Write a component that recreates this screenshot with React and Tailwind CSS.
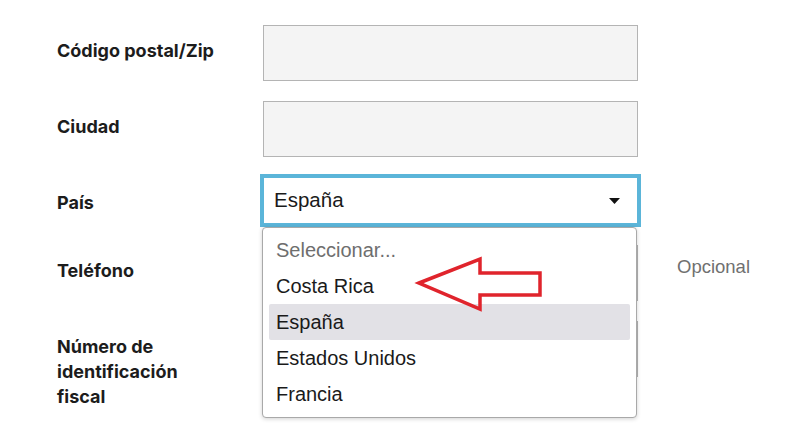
import React from "react";

const labelCls = "w-[206px] shrink-0 pt-[13px] text-[18px] leading-[25px] font-bold text-[#1c1c1c] [font-family:Inter,'Noto_Sans',sans-serif]";

function Row({ label, children, extra, className = "" }) {
  return (
    <div className={"flex items-start " + className}>
      <div className={labelCls}>{label}</div>
      {children}
      {extra}
    </div>
  );
}

const inputCls = "w-[375px] h-[56px] shrink-0 bg-[#f4f4f4] border border-[#b4b4b4]";

export default function App() {
  const items = ["Costa Rica", "España", "Estados Unidos", "Francia"];
  return (
    <div className="relative w-[805px] h-[439px] bg-white overflow-hidden [font-family:'Liberation_Sans',Arial,sans-serif]">
      <div className="flex flex-col pl-[57px] pt-[25px]">
        <Row label="Código postal/Zip">
          <div className={inputCls} />
        </Row>
        <Row label="Ciudad" className="mt-[20px]">
          <div className={inputCls} />
        </Row>
        <Row label="País" className="mt-[20px]">
          <div className="relative w-[375px] shrink-0">
            <div className="h-[47px] bg-white outline-[3px] outline-solid outline-[#5bb5d9] border border-[#5bb5d9] flex items-center justify-between pl-[10px] pr-[17px]">
              <span className="text-[20.5px] text-[#1a1a1a]">España</span>
              <svg width="11" height="6" viewBox="0 0 11 6"><path d="M0 0 H11 L5.5 6 Z" fill="#111" /></svg>
            </div>
            <div className="absolute z-10 left-[-1px] top-[50px] w-[375px] bg-white border border-[#a9a9a9] rounded-[4px] shadow-[0_1px_4px_rgba(0,0,0,0.18)] pt-[4px] pb-[5px] px-[6px]">
              <div className="h-[36px] flex items-center pl-[7px] text-[20px] text-[#6e6e6e]">Seleccionar...</div>
              {items.map((it) => (
                <div
                  key={it}
                  className={
                    "h-[36px] flex items-center pl-[7px] text-[20px] text-[#1a1a1a] rounded-[2px] " +
                    (it === "España" ? "bg-[#e2e1e6]" : "")
                  }
                >
                  {it}
                </div>
              ))}
            </div>
          </div>
        </Row>
        <Row
          label="Teléfono"
          className="mt-[21px]"
          extra={<div className="ml-[39px] pt-[11px] text-[18.5px] leading-[22px] text-[#707070]">Opcional</div>}
        >
          <div className={inputCls} />
        </Row>
        <Row
          label={<>Número de<br />identificación<br />fiscal</>}
          className="mt-[20px]"
        >
          <div className={inputCls} />
        </Row>
      </div>
      <svg className="absolute left-0 top-0 z-20 pointer-events-none" width="805" height="439">
        <polygon
          points="419,283 480,259 480,273 540,273 540,295 480,295 480,309"
          fill="none"
          stroke="#e0242c"
          strokeWidth="3.5"
          strokeLinejoin="miter"
        />
      </svg>
    </div>
  );
}
